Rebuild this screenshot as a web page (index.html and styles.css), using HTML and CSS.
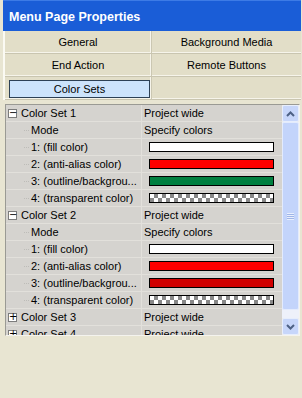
FILE: index.html
```html
<!DOCTYPE html>
<html>
<head>
<meta charset="utf-8">
<link rel="stylesheet" href="styles.css">
</head>
<body>
<div class="window">
  <div class="titlebar">Menu Page Properties</div>
  <div class="tabs">
    <div class="tab">General</div>
    <div class="tab">Background Media</div>
    <div class="tab">End Action</div>
    <div class="tab">Remote Buttons</div>
    <div class="tab tab-active"><span class="tab-btn">Color Sets</span></div>
    <div class="tab"></div>
  </div>
  <div class="list">
    <div class="tree">
      <div class="row group"><div class="name"><span class="box">−</span>Color Set 1</div><div class="val">Project wide</div></div>
      <div class="row"><div class="name"><span class="stub"></span>Mode</div><div class="val">Specify colors</div></div>
      <div class="row"><div class="name"><span class="stub"></span>1: (fill color)</div><div class="val"><span class="sw white"></span></div></div>
      <div class="row"><div class="name"><span class="stub"></span>2: (anti-alias color)</div><div class="val"><span class="sw red"></span></div></div>
      <div class="row"><div class="name"><span class="stub"></span>3: (outline/backgrou...</div><div class="val"><span class="sw green"></span></div></div>
      <div class="row"><div class="name"><span class="stub"></span>4: (transparent color)</div><div class="val"><span class="sw checker"></span></div></div>
      <div class="row group"><div class="name"><span class="box">−</span>Color Set 2</div><div class="val">Project wide</div></div>
      <div class="row"><div class="name"><span class="stub"></span>Mode</div><div class="val">Specify colors</div></div>
      <div class="row"><div class="name"><span class="stub"></span>1: (fill color)</div><div class="val"><span class="sw white"></span></div></div>
      <div class="row"><div class="name"><span class="stub"></span>2: (anti-alias color)</div><div class="val"><span class="sw red"></span></div></div>
      <div class="row"><div class="name"><span class="stub"></span>3: (outline/backgrou...</div><div class="val"><span class="sw darkred"></span></div></div>
      <div class="row"><div class="name"><span class="stub"></span>4: (transparent color)</div><div class="val"><span class="sw checker"></span></div></div>
      <div class="row group"><div class="name"><span class="box">+</span>Color Set 3</div><div class="val">Project wide</div></div>
      <div class="row group"><div class="name"><span class="box">+</span>Color Set 4</div><div class="val">Project wide</div></div>
    </div>
    <div class="scrollbar">
      <div class="sb-btn"><svg width="9" height="6" viewBox="0 0 9 6"><path d="M1 5 L4.5 1.5 L8 5" fill="none" stroke="#4d6185" stroke-width="2"/></svg></div>
      <div class="sb-track">
        <div class="sb-thumb"><span class="grip"></span></div>
      </div>
      <div class="sb-btn"><svg width="9" height="6" viewBox="0 0 9 6"><path d="M1 1 L4.5 4.5 L8 1" fill="none" stroke="#4d6185" stroke-width="2"/></svg></div>
    </div>
  </div>
</div>
</body>
</html>
```

FILE: styles.css
```css
html, body {
  margin: 0;
  padding: 0;
}
body {
  background: #e8e5d2;
  font-family: "Liberation Sans", Arial, sans-serif;
  font-size: 11px;
  color: #000;
  width: 302px;
  height: 398px;
  overflow: hidden;
}
.window {
  margin-left: 3px;
  width: 298px;
}
.titlebar {
  height: 31px;
  background: #1a5dd7;
  color: #fff;
  font-weight: bold;
  font-size: 12.5px;
  line-height: 33px;
  padding-left: 6px;
  box-sizing: border-box;
  border-top: 1px solid #3d7be6;
}
.tabs {
  display: grid;
  grid-template-columns: 147px 1fr;
  border-left: 2px solid #fbfaf3;
  background: #e2dec8;
}
.tab {
  height: 22px;
  line-height: 22px;
  text-align: center;
  border-bottom: 1px solid #c9c5b0;
  box-shadow: inset 0 -1px 0 #f6f4ea;
}
.tab:nth-child(odd) {
  border-right: 1px solid #cbc7b2;
  box-shadow: inset -1px -1px 0 #f6f4ea;
}
.tab-active {
  padding: 3px 1px 2px 4px;
  box-sizing: border-box;
  height: 23px;
}
.tab-btn {
  display: block;
  height: 18px;
  line-height: 17px;
  background: #cce3fb;
  border: 1px solid #2c4055;
  box-sizing: border-box;
}
.list {
  display: flex;
  height: 230px;
  margin-left: 2px;
  margin-right: 1px;
  margin-top: 4px;
  border: 1px solid #9a9a94;
  border-right-color: #f4f3ee;
  border-bottom-color: #f4f3ee;
  background: #d5d3cf;
  overflow: hidden;
}
.tree {
  flex: 1;
  min-width: 0;
}
.row {
  display: flex;
  height: 16px;
  line-height: 16px;
  border-bottom: 1px solid #e2e0db;
  white-space: nowrap;
}
.name {
  width: 135px;
  flex: none;
  padding-left: 26px;
  box-sizing: border-box;
  display: flex;
  align-items: center;
  overflow: hidden;
}
.group .name {
  padding-left: 2px;
}
.val {
  flex: 1;
  display: flex;
  align-items: center;
  padding-left: 2px;
  border-left: 1px solid #e2e0db;
}
.box {
  width: 9px;
  height: 9px;
  box-sizing: border-box;
  border: 1px solid #7c7c7c;
  background: #fff;
  font-size: 10px;
  line-height: 6px;
  text-align: center;
  margin-right: 4px;
  font-family: "DejaVu Sans", sans-serif;
  color: #000;
}
.stub {
  width: 5px;
  border-top: 1px dotted #bdbcb8;
  margin-right: 2px;
  margin-left: -8px;
}
.sw {
  display: block;
  width: 125px;
  height: 10px;
  margin-left: 5px;
  box-sizing: border-box;
  border: 1px solid #000;
}
.white { background: #fff; }
.red { background: #ff0000; }
.green { background: #008040; }
.darkred { background: #d00000; }
.checker {
  background-color: #fff;
  background-image:
    linear-gradient(45deg, #888 25%, transparent 25%, transparent 75%, #888 75%),
    linear-gradient(45deg, #888 25%, transparent 25%, transparent 75%, #888 75%);
  background-size: 8px 8px;
  background-position: 0 0, 4px 4px;
}
.scrollbar {
  width: 17px;
  flex: none;
  display: flex;
  flex-direction: column;
  background: #f1f0ea;
}
.sb-btn {
  height: 17px;
  flex: none;
  display: flex;
  align-items: center;
  justify-content: center;
  background: #c7d6fa;
  border: 1px solid #e7eefc;
  box-sizing: border-box;
  border-radius: 2px;
}
.sb-track {
  flex: 1;
  display: flex;
  flex-direction: column;
  padding-bottom: 8px;
  background: #eef1fa;
}
.sb-thumb {
  flex: 1;
  background: #c3d4fb;
  border: 1px solid #e3ebfd;
  border-radius: 2px;
  display: flex;
  align-items: center;
  justify-content: center;
}
.grip {
  width: 7px;
  height: 7px;
  background: repeating-linear-gradient(#e9effd 0 1px, #9fb5e8 1px 2px);
}
```
